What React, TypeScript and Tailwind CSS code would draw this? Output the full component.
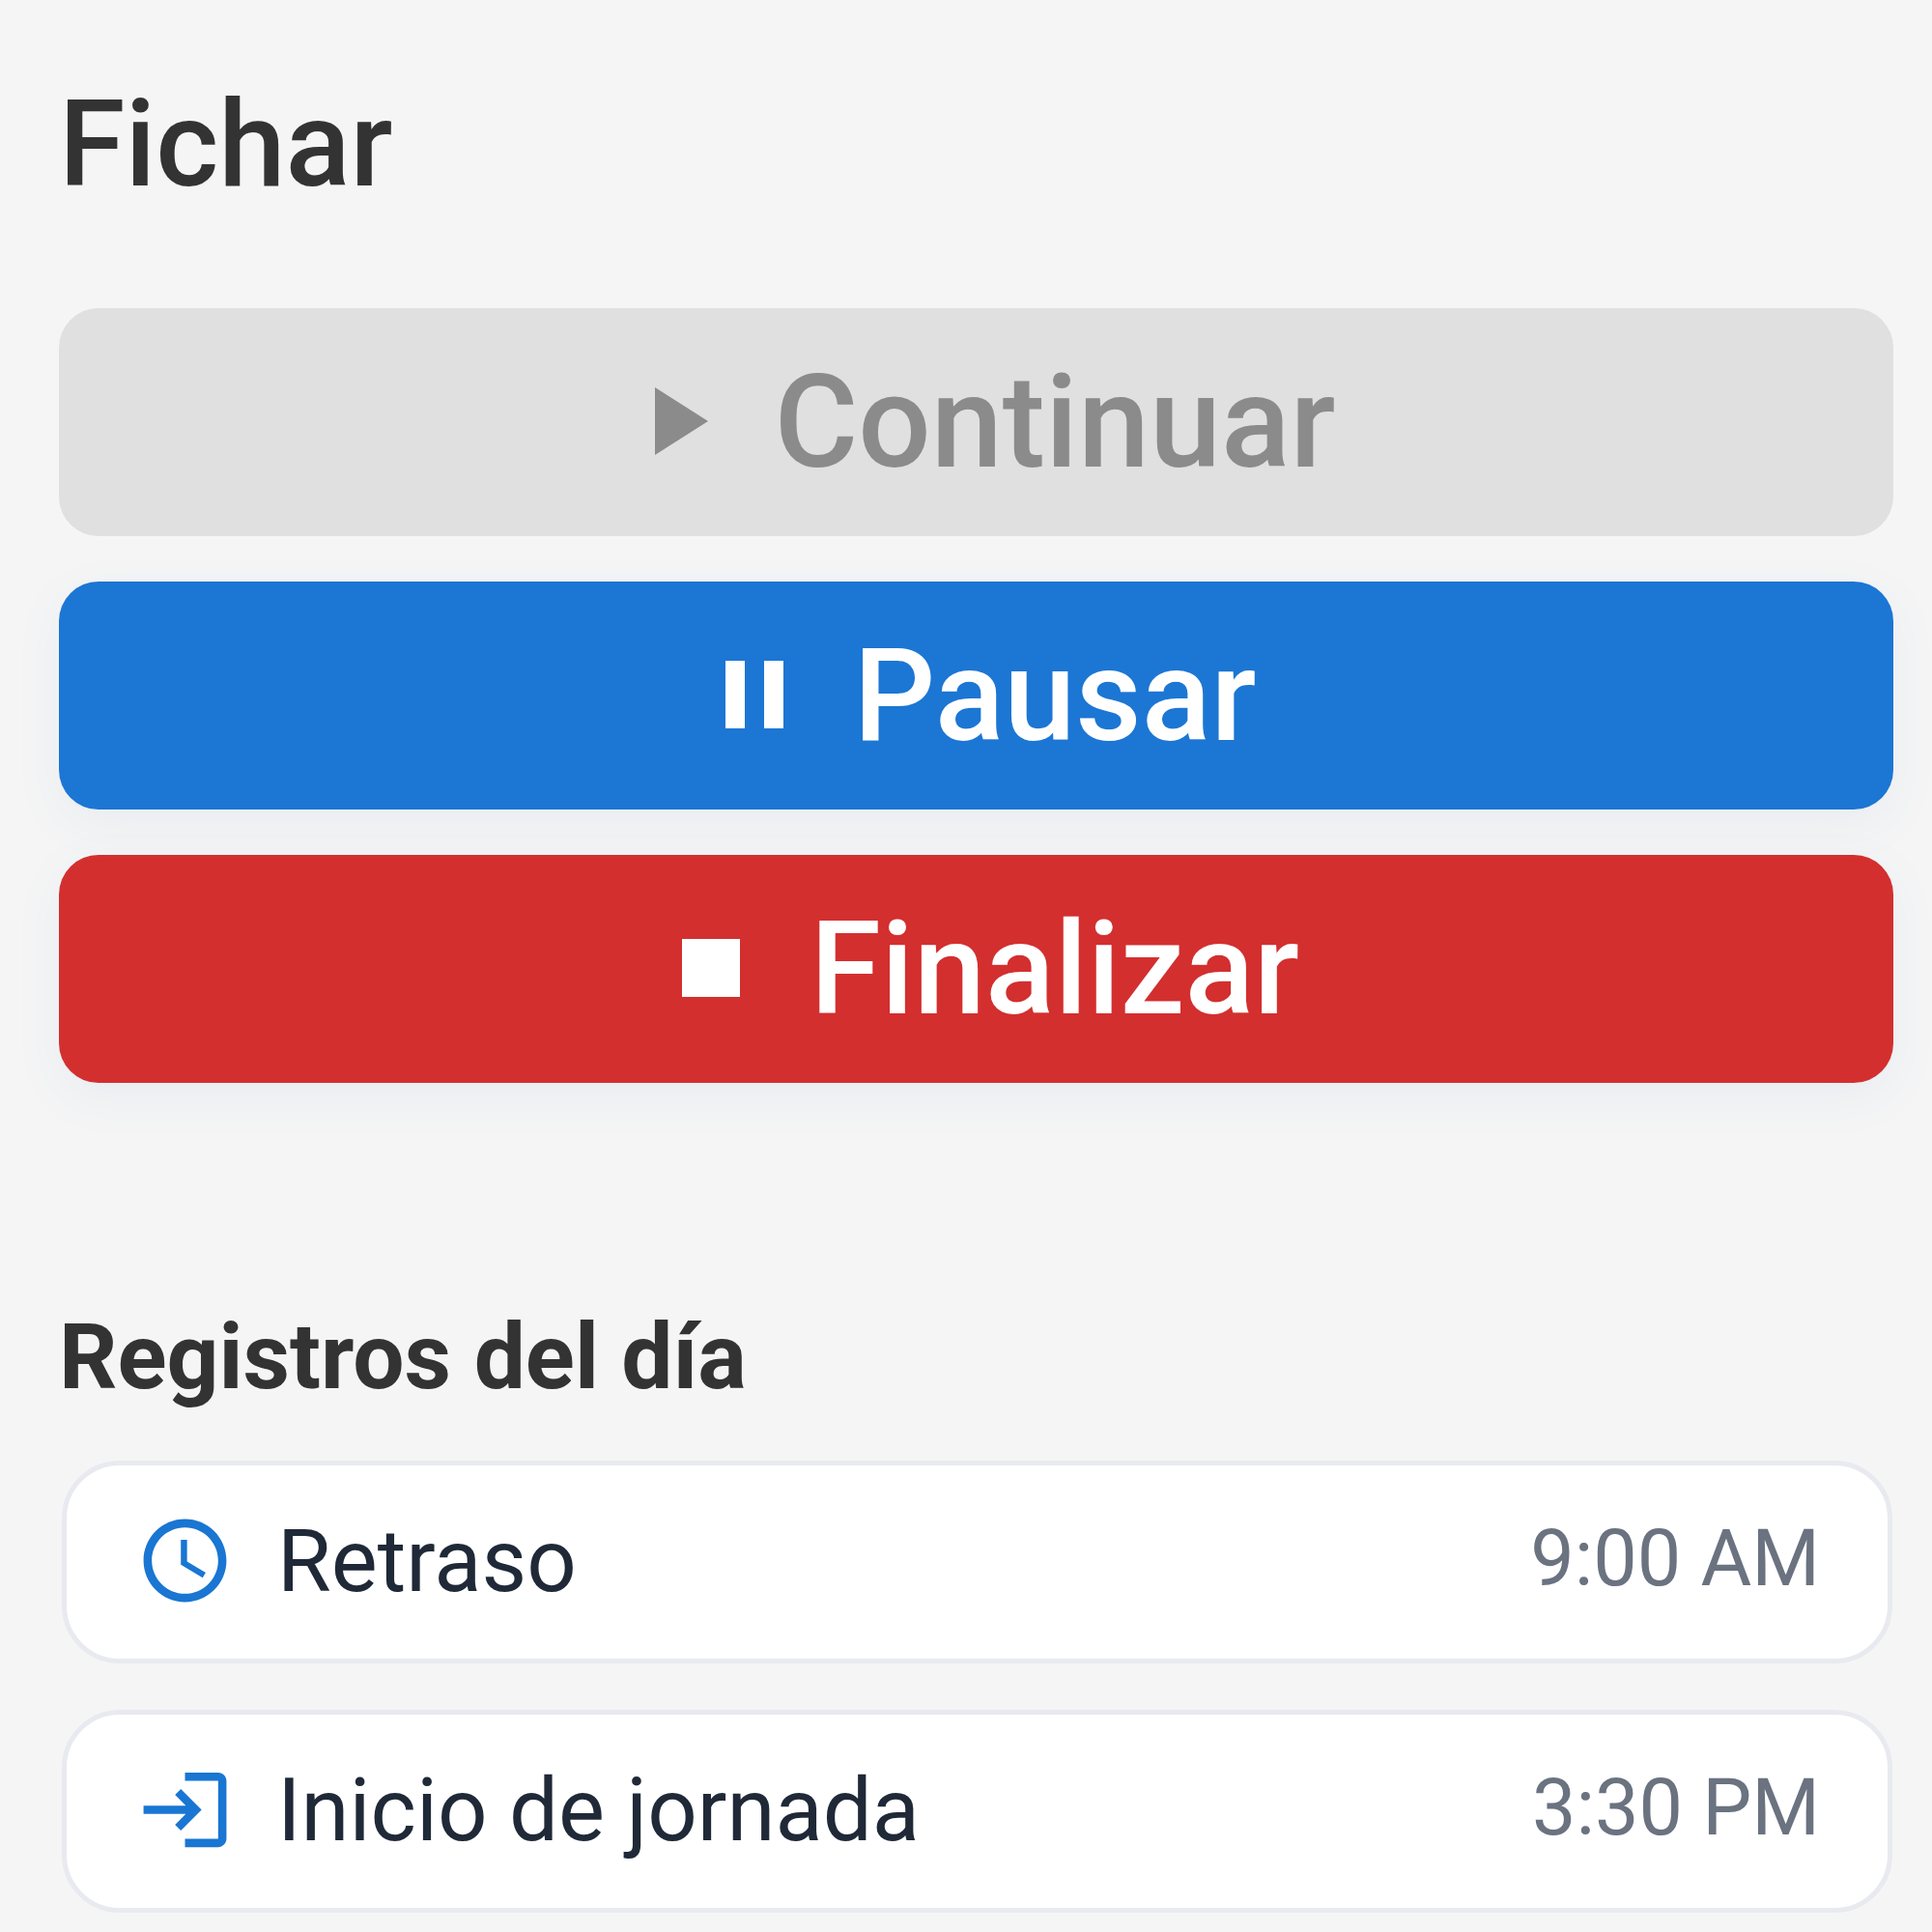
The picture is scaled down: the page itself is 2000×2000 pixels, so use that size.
import React from "react";

const font = "[font-family:Roboto,'Noto_Sans',sans-serif]";

function Icon({ d, className }: { d: string; className: string }) {
  return (
    <svg viewBox="0 0 24 24" fill="currentColor" className={className} aria-hidden="true">
      <path d={d} />
    </svg>
  );
}

const PLAY = "M8 5v14l11-7z";
const PAUSE = "M6 19h4V5H6v14zm8-14v14h4V5h-4z";
const STOP = "M6 6h12v12H6z";
const SCHEDULE =
  "M11.99 2C6.47 2 2 6.48 2 12s4.47 10 9.99 10C17.52 22 22 17.52 22 12S17.52 2 11.99 2zM12 20c-4.42 0-8-3.58-8-8s3.58-8 8-8 8 3.58 8 8-3.58 8-8 8zm.5-13H11v6l5.25 3.15.75-1.23-4.5-2.67z";
const LOGIN =
  "M11 7L9.6 8.4l2.6 2.6H2v2h10.2l-2.6 2.6L11 17l5-5-5-5zm9 12h-8v2h8c1.1 0 2-.9 2-2V5c0-1.1-.9-2-2-2h-8v2h8v14z";

function ActionButton({ icon, label, className }: { icon: string; label: string; className: string }) {
  return (
    <button
      type="button"
      className={`flex h-[236px] w-full items-center justify-center gap-[43px] rounded-[41px] text-[133px] leading-none font-medium ${className}`}
    >
      <Icon d={icon} className="mb-[2px] h-[120px] w-[120px]" />
      <span>{label}</span>
    </button>
  );
}

function RecordRow({ icon, label, time }: { icon: string; label: string; time: string }) {
  return (
    <div className="mr-[1px] ml-[3px] flex h-[210px] items-center justify-between rounded-[60px] border-[5px] border-[#e8eaf0] bg-white pr-[70px] pl-[71px]">
      <div className="flex items-center gap-[44px] pb-[3px]">
        <Icon d={icon} className="h-[103px] w-[103px] text-[#1976d2]" />
        <span className="text-[90.5px] leading-[108px] text-[#1f2937]">{label}</span>
      </div>
      <span className="pb-[7px] text-[81px] leading-[96px] text-[#6b7280]">{time}</span>
    </div>
  );
}

export default function App() {
  return (
    <div className={`h-[2000px] w-[2000px] overflow-hidden bg-[#f5f5f5] pt-[77px] pr-[40px] pl-[61px] ${font}`}>
      <h1 className="mb-[98px] text-[124.5px] leading-[144px] font-medium text-[#333333]">Fichar</h1>

      <div className="flex flex-col gap-[47px]">
        <ActionButton icon={PLAY} label="Continuar" className="bg-[#e0e0e0] text-[#8b8b8b]" />
        <ActionButton
          icon={PAUSE}
          label="Pausar"
          className="bg-[#1c76d4] text-white shadow-[0_15px_50px_rgba(65,125,205,0.07)]"
        />
        <ActionButton
          icon={STOP}
          label="Finalizar"
          className="bg-[#d32f2f] text-white shadow-[0_15px_50px_rgba(65,125,205,0.07)]"
        />
      </div>

      <h2 className="mt-[230px] mb-[53px] text-[94.5px] leading-[108px] font-bold text-[#333333]">Registros del día</h2>

      <div className="flex flex-col gap-[48px]">
        <RecordRow icon={SCHEDULE} label="Retraso" time="9:00 AM" />
        <RecordRow icon={LOGIN} label="Inicio de jornada" time="3:30 PM" />
      </div>
    </div>
  );
}
